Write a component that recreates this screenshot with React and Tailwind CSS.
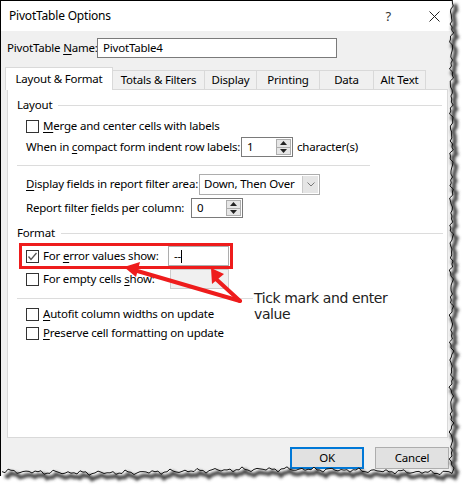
import React from 'react';

const jag = (i, a, b) => Math.sin(i * 1.3) * a + Math.sin(i * 2.9 + 1) * b + Math.sin(i * 7.1) * 0.7;

const rightEdge = [];
for (let y = 0; y <= 470; y += 3) rightEdge.push([451.5 + jag(y / 3, 1.1, 0.9), y]);
const bottomEdge = [];
for (let x = 452; x >= 0; x -= 3) bottomEdge.push([x, 471 + Math.sin(x / 60) * 1.8 + jag(x / 3 + 5, 1.2, 0.9)]);
const edge = [...rightEdge, ...bottomEdge];
const edgeStr = edge.map(p => p.join(',')).join(' ');

const U = ({ children }) => <span className="underline underline-offset-2">{children}</span>;

const CheckBox = ({ checked }) => (
    <div className="w-[13px] h-[13px] border border-[#333] bg-white shrink-0 flex items-center justify-center">
        {checked && (
            <svg width="11" height="11" viewBox="0 0 11 11">
                <polyline points="1.5,5.5 4,8.5 9.5,2" fill="none" stroke="#555" strokeWidth="1.3" />
            </svg>
        )}
    </div>
);

const Spinner = ({ value }) => (
    <div className="w-[52px] h-[20px] border border-[#7a7a7a] bg-white flex items-center justify-between pl-[5px] pr-[1px] shrink-0">
        <span>{value}</span>
        <div className="w-[15px] h-[16px] border border-[#adadad] bg-[#e6e6e6] flex flex-col">
            <div className="flex-1 flex items-center justify-center border-b border-[#adadad]">
                <svg width="7" height="4"><polygon points="0,4 7,4 3.5,0" fill="#222" /></svg>
            </div>
            <div className="flex-1 flex items-center justify-center">
                <svg width="7" height="4"><polygon points="0,0 7,0 3.5,4" fill="#222" /></svg>
            </div>
        </div>
    </div>
);

const Tab = ({ label, active, w }) => (
    <div
        className={`flex items-center justify-center border-t border-l border-r border-[#d9d9d9] ${
            active ? 'h-[23px] bg-white -mb-px relative z-10' : 'h-[19px] bg-[#f0f0f0] -ml-px'
        }`}
        style={{ width: w }}
    >
        {label}
    </div>
);

const App = () => {
    return (
        <div className="w-[471px] h-[492px] bg-white relative overflow-hidden text-[11.5px] tracking-[-0.2px] whitespace-nowrap text-black font-['Noto_Sans',sans-serif] leading-none">
            <div className="w-[456px] h-[476px] border-l border-t border-black bg-[#f0f0f0] flex flex-col">
                {/* Title bar */}
                <div className="h-[30px] bg-white flex items-center pl-[8px] pr-[16px]">
                    <span className="text-[12px]">PivotTable Options</span>
                    <span className="ml-auto mr-[38px] text-[13px] text-[#333]">?</span>
                    <svg width="11" height="11" viewBox="0 0 11 11">
                        <path d="M0.5 0.5 L10.5 10.5 M10.5 0.5 L0.5 10.5" stroke="#222" strokeWidth="1" />
                    </svg>
                </div>

                {/* Name row */}
                <div className="flex items-center mt-[7px] pl-[6px]">
                    <span className="w-[90px]">PivotTable <U>N</U>ame:</span>
                    <div className="w-[240px] h-[20px] border border-[#7a7a7a] bg-white flex items-center pl-[5px]">PivotTable4</div>
                </div>

                {/* Tabs */}
                <div className="flex items-end mt-[9px] pl-[4px]">
                    <Tab label="Layout & Format" active w={108} />
                    <Tab label="Totals & Filters" w={93} />
                    <Tab label="Display" w={53} />
                    <Tab label="Printing" w={64} />
                    <Tab label="Data" w={55} />
                    <Tab label="Alt Text" w={53} />
                </div>

                {/* Panel */}
                <div className="ml-[6px] w-[441px] h-[349px] border border-[#d9d9d9] bg-white relative">
                    <div className="flex flex-col pl-[9px]">
                        <div className="mt-[7px] h-[16px] flex items-center">
                            <span>Layout</span>
                            <div className="ml-[6px] w-[384px] h-px bg-[#dcdcdc]"></div>
                        </div>
                        <div className="mt-[5px] h-[16px] flex items-center pl-[9px] gap-[4px]">
                            <CheckBox />
                            <span><U>M</U>erge and center cells with labels</span>
                        </div>
                        <div className="mt-[3px] h-[20px] flex items-center pl-[9px]">
                            <span className="w-[215px] shrink-0">When in <U>c</U>ompact form indent row labels:</span>
                            <Spinner value="1" />
                            <span className="ml-[4px]">character(s)</span>
                        </div>
                        <div className="mt-[8px] w-[353px] h-px bg-[#dcdcdc]"></div>
                        <div className="mt-[8px] h-[20px] flex items-center pl-[9px]">
                            <span className="w-[173px] shrink-0"><U>D</U>isplay fields in report filter area:</span>
                            <div className="w-[121px] h-[21px] border border-[#adadad] bg-white flex items-center justify-between pl-[4px] pr-px">
                                <span>Down, Then Over</span>
                                <div className="w-[16px] h-[17px] bg-[#e5e5e5] border-l border-[#c9c9c9] flex items-center justify-center">
                                    <svg width="8" height="5"><polyline points="0.5,0.5 4,4 7.5,0.5" fill="none" stroke="#777" strokeWidth="1" /></svg>
                                </div>
                            </div>
                        </div>
                        <div className="mt-[4px] h-[20px] flex items-center pl-[9px]">
                            <span className="w-[165px] shrink-0">Report filter <U>f</U>ields per column:</span>
                            <Spinner value="0" />
                        </div>
                        <div className="mt-[7px] h-[16px] flex items-center">
                            <span>Format</span>
                            <div className="ml-[6px] w-[382px] h-px bg-[#dcdcdc]"></div>
                        </div>
                        <div className="mt-[5px] h-[20px] flex items-center pl-[9px] gap-[4px]">
                            <CheckBox checked />
                            <span className="w-[121px] shrink-0">For <U>e</U>rror values show:</span>
                            <div className="w-[61px] h-[20px] border border-[#adadad] bg-white flex items-center pl-[5px]">
                                --<span className="w-px h-[13px] bg-black"></span>
                            </div>
                        </div>
                        <div className="mt-[3px] h-[20px] flex items-center pl-[9px] gap-[4px]">
                            <CheckBox />
                            <span className="w-[123px] shrink-0">For empty cells <U>s</U>how:</span>
                            <div className="w-[59px] h-[20px] border border-[#cccccc] bg-[#f0f0f0]"></div>
                        </div>
                        <div className="mt-[9px] w-[353px] h-px bg-[#dcdcdc]"></div>
                        <div className="mt-[7px] h-[16px] flex items-center pl-[9px] gap-[4px]">
                            <CheckBox />
                            <span><U>A</U>utofit column widths on update</span>
                        </div>
                        <div className="mt-[3px] h-[16px] flex items-center pl-[9px] gap-[4px]">
                            <CheckBox />
                            <span><U>P</U>reserve cell formatting on update</span>
                        </div>
                    </div>

                    {/* red highlight */}
                    <div className="absolute left-[11px] top-[153px] w-[214px] h-[26px] border-[3px] border-[#ee1c1c]"></div>

                    {/* annotation */}
                    <div className="absolute left-[245px] top-[200px] bg-white text-[14px] leading-[16px] text-[#222] font-['DejaVu_Sans',sans-serif] tracking-[-0.4px] px-px">
                        Tick mark and enter<br />value
                    </div>
                </div>

                {/* Buttons */}
                <div className="flex mt-[9px] pl-[289px] gap-[11px]">
                    <div className="w-[74px] h-[22px] border-2 border-[#0078d7] bg-[#e1e1e1] flex items-center justify-center">OK</div>
                    <div className="w-[74px] h-[22px] border border-[#adadad] bg-[#e1e1e1] flex items-center justify-center">Cancel</div>
                </div>
            </div>

            {/* arrows + torn edge */}
            <svg className="absolute left-0 top-0" width="471" height="492">
                <defs>
                    <filter id="blur" x="-10%" y="-10%" width="120%" height="120%">
                        <feGaussianBlur stdDeviation="1.4" />
                    </filter>
                </defs>
                <g stroke="#ee1c1c" strokeWidth="4" strokeLinecap="round" fill="#ee1c1c">
                    <line x1="240" y1="301" x2="134" y2="270" />
                    <line x1="240" y1="301" x2="216" y2="279" />
                </g>
                <polygon points="124,267 140,262 136,277" fill="#ee1c1c" />
                <polygon points="211,268 224,274 212,284" fill="#ee1c1c" />
                <polygon points={`${edgeStr} 0,492 471,492 471,0`} fill="white" />
                <polyline points={edgeStr} fill="none" stroke="#444" strokeWidth="4" filter="url(#blur)" transform="translate(3,4)" />
                <polyline points={edgeStr} fill="none" stroke="#111" strokeWidth="1" />
            </svg>
        </div>
    );
};

export default App;
